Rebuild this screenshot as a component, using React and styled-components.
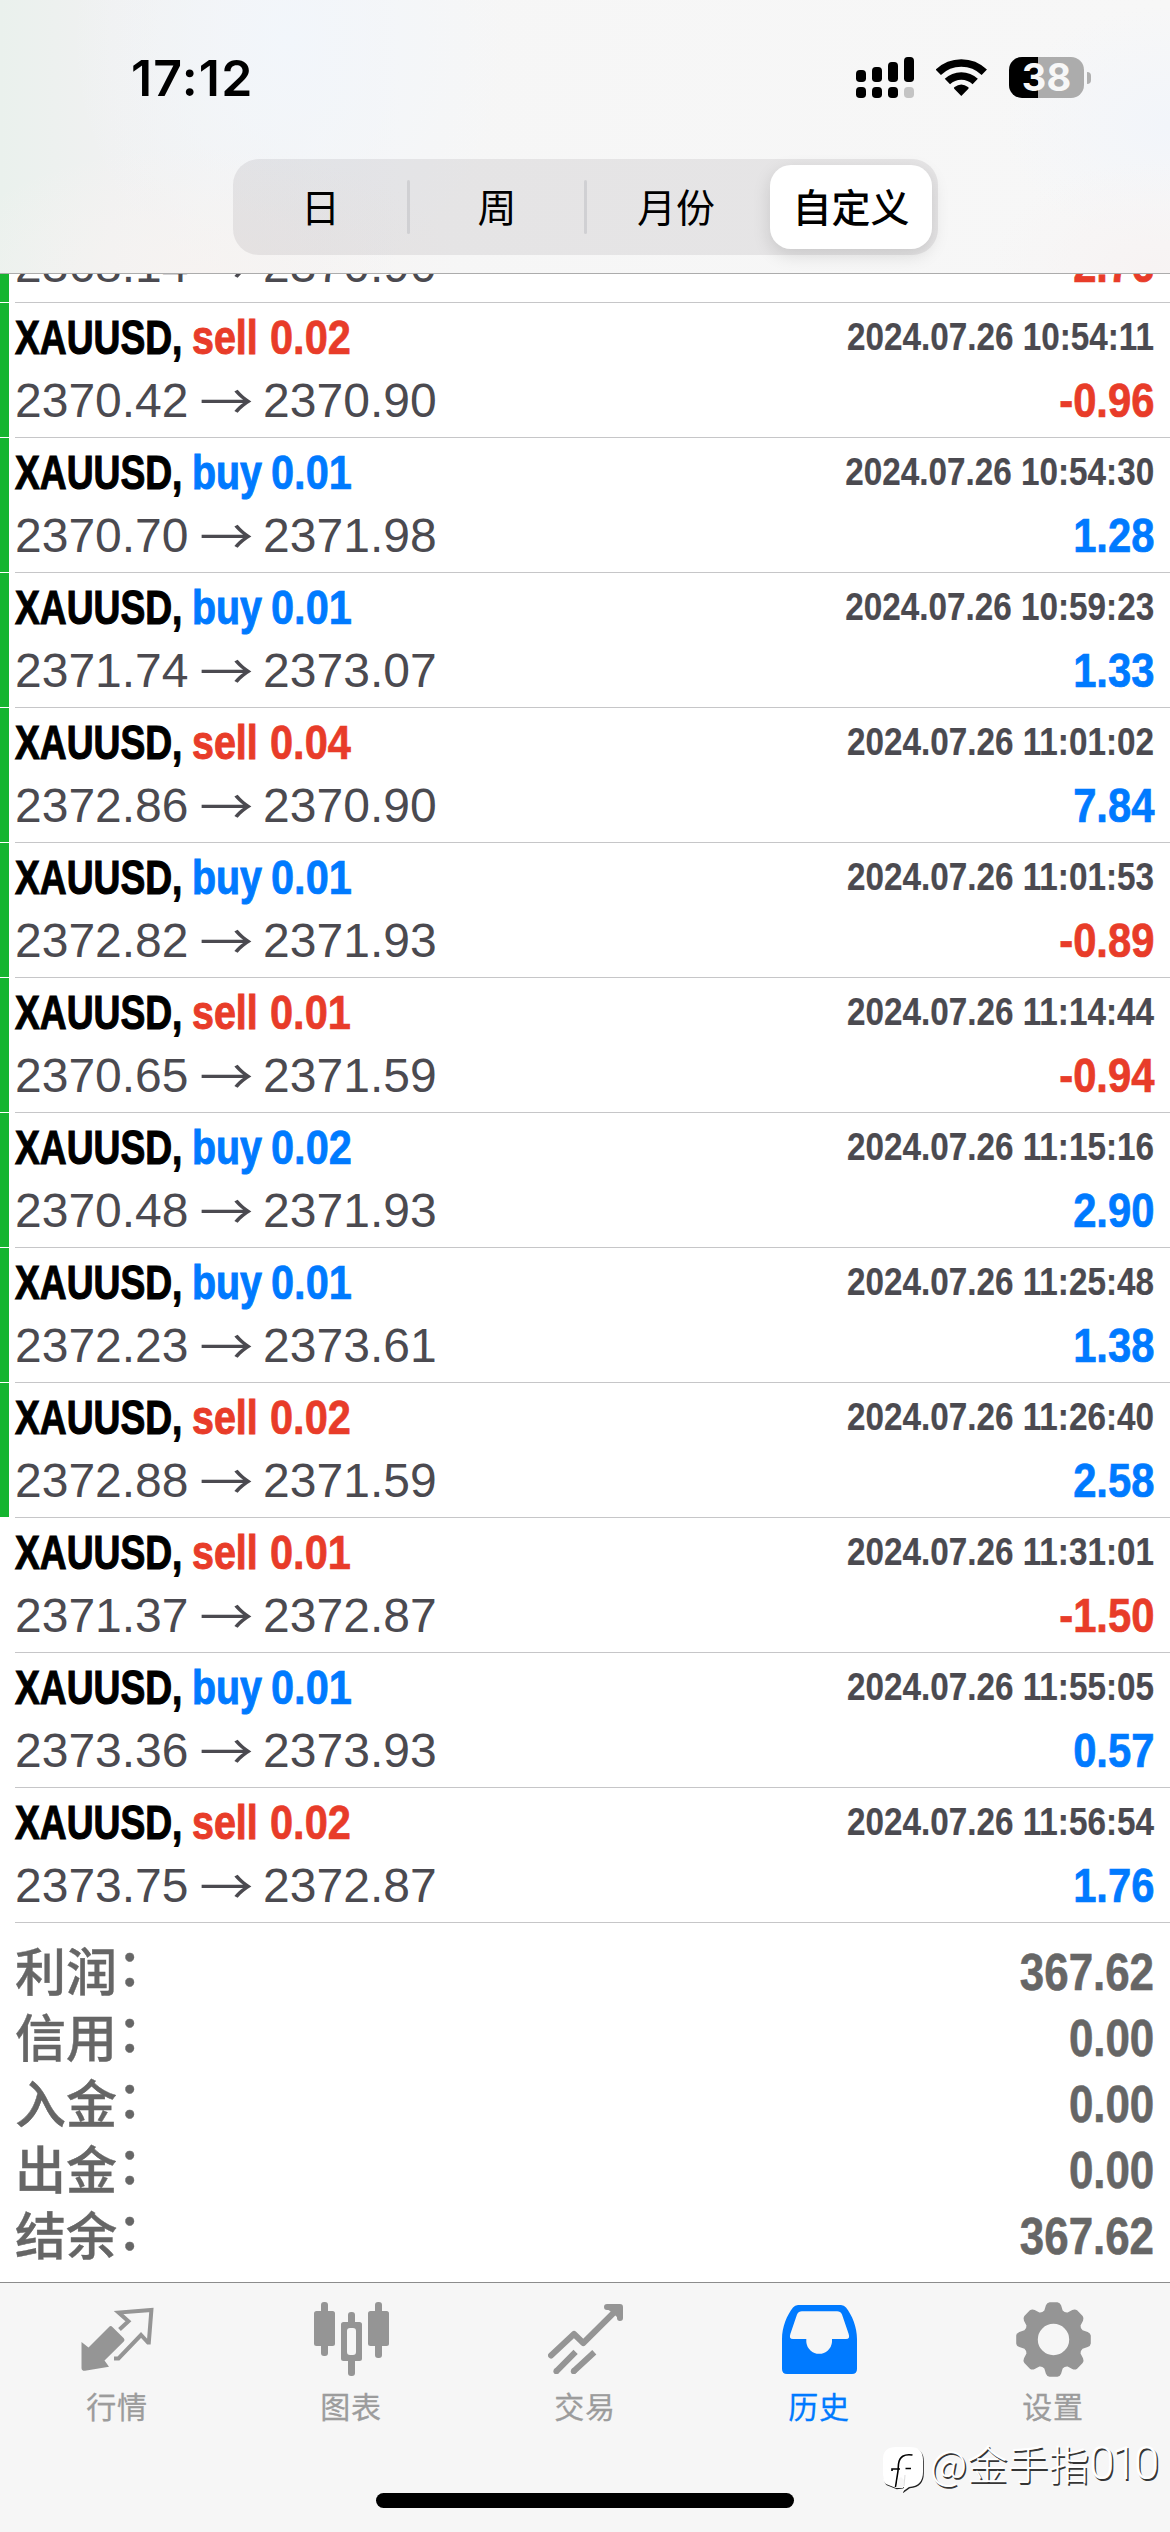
import React from "react";
import styled, { createGlobalStyle } from "styled-components";

const RED = "#e83c29";
const BLUE = "#007aff";
const CJK = '"Noto Sans CJK SC", sans-serif';
const HELV = '"Liberation Sans", Arial, "Noto Sans CJK SC", sans-serif';

const GlobalStyle = createGlobalStyle`
  *, *::before, *::after { box-sizing: border-box; }
  body { margin: 0; background: #fff; }
`;

const Screen = styled.main`
  width: 1170px;
  height: 2532px;
  display: flex;
  flex-direction: column;
  overflow: hidden;
  background: #fff;
  font-family: ${HELV};
`;

const Header = styled.header`
  flex: none;
  height: 274px;
  border-bottom: 1px solid #acacac;
  background:
    radial-gradient(ellipse 260px 130px at 200px 274px, rgba(247, 243, 241, 0.85), rgba(247, 243, 241, 0)),
    radial-gradient(ellipse 220px 260px at 290px 40px, rgba(242, 246, 251, 1), rgba(242, 246, 251, 0)),
    radial-gradient(ellipse 160px 110px at 1150px 270px, rgba(247, 243, 243, 1), rgba(247, 243, 243, 0)),
    radial-gradient(ellipse 170px 120px at 1170px 125px, rgba(242, 245, 250, 1), rgba(242, 245, 250, 0)),
    linear-gradient(90deg, #eaf1ed 0, #f0f1f1 110px, #f6f6f6 400px, #f7f7f7 100%);
`;

const StatusBar = styled.div`
  height: 159px;
  display: flex;
  justify-content: space-between;
  padding: 57px 79px 0 131px;
`;

const Clock = styled.div`
  height: 42px;
  font: 600 50px/42px Inter, sans-serif;
  letter-spacing: 1.2px;
  color: #000;
`;

const StatusIcons = styled.div`
  display: flex;
  align-items: flex-start;
  gap: 22px;
`;

const Battery = styled.div`
  display: flex;
  align-items: center;
  gap: 3px;
`;

const BatteryBody = styled.div`
  width: 75px;
  height: 41px;
  border-radius: 13px;
  background: linear-gradient(90deg, #000 29px, #acacac 29px);
  color: #f7f7f7;
  font: 700 38px/41px Inter, sans-serif;
  text-align: center;
`;

const BatteryTip = styled.div`
  width: 4px;
  height: 12px;
  border-radius: 0 5px 5px 0;
  background: #b0b0b0;
`;

const Segmented = styled.div`
  width: 705px;
  height: 96px;
  margin: 0 auto 0 233px;
  padding: 6px;
  display: flex;
  align-items: center;
  border-radius: 26px;
  background: rgba(118, 112, 118, 0.13);
`;

const Segment = styled.button`
  flex: 0 0 ${(p) => p.$width}px;
  height: 84px;
  padding: 0 ${(p) => p.$inset || 0}px 4px 0;
  border: 0;
  border-radius: 21px;
  background: ${(p) => (p.$active ? "#fff" : "transparent")};
  box-shadow: ${(p) => (p.$active ? "0 6px 18px rgba(0,0,0,.13)" : "none")};
  color: #000;
  font: ${(p) => (p.$active ? 500 : 400)} 39px/80px ${CJK};
  text-align: center;
`;

const Divider = styled.span`
  flex: none;
  width: 3px;
  height: 54px;
  border-radius: 2px;
  background: #d0d0d3;
`;

const History = styled.section`
  flex: none;
  height: 2008px;
  overflow: hidden;
  display: flex;
  flex-direction: column;
`;

const Deals = styled.ul`
  list-style: none;
  margin: -106px 0 0;
  padding: 0;
`;

const Deal = styled.li`
  display: flex;
  height: 135px;
`;

const Marker = styled.span`
  width: 9px;
  height: 134px;
  margin-right: 6px;
  background: ${(p) => (p.$on ? "#15b52f" : "transparent")};
`;

const DealBody = styled.div`
  flex: 1;
  padding: 3px 16px 0 0;
  border-bottom: 1px solid #c6c6c8;
`;

const Line = styled.div`
  display: flex;
  justify-content: space-between;
  height: 63px;
  line-height: 63px;
  font-size: 48px;
  white-space: pre;
`;

const Group = styled.div`
  display: flex;
`;

const Condensed = styled.span`
  display: block;
  width: ${(p) => (p.$width ? p.$width + "px" : "auto")};
  font-weight: 700;
  color: ${(p) => p.$color};
  transform: scaleX(${(p) => p.$scale});
  transform-origin: ${(p) => p.$origin || "left"} center;
  -webkit-text-stroke: ${(p) => p.$stroke || 0}px ${(p) => p.$color};
`;

const Stamp = styled(Condensed)`
  font-size: 39px;
  line-height: 61px;
`;

const Price = styled.span`
  color: #4b4a50;
`;

const Arrow = styled.span`
  display: block;
  width: 74.6px;
  text-align: center;
  color: #4b4a50;
  font-family: ${CJK};
  transform: translateY(-2px) scaleX(1.12);
`;

const Summary = styled.dl`
  margin: 0;
  padding: 16px 16px 0 15px;
`;

const Total = styled.div`
  display: flex;
  justify-content: space-between;
  height: 66px;
  font-size: 51px;
  line-height: 67px;
  color: #666;
`;

const TotalName = styled.dt`
  display: flex;
  line-height: 60px;
  font-family: ${CJK};
  font-weight: 500;
  -webkit-text-stroke: 0.4px #666;
`;

const Colon = styled.span`
  line-height: 51px;
`;

const TotalValue = styled.dd`
  margin: 0;
`;

const TabBar = styled.nav`
  position: relative;
  flex: none;
  height: 250px;
  border-top: 1px solid #8c8c8c;
  background: #f6f6f6;
  display: flex;
  flex-direction: column;
`;

const Tabs = styled.div`
  display: flex;
  height: 210px;
`;

const Tab = styled.a`
  flex: 1;
  display: flex;
  flex-direction: column;
  align-items: center;
  padding-top: 19px;
  color: ${(p) => (p.$active ? BLUE : "#959595")};
  font: 400 30px/44px ${CJK};
  svg { display: block; margin-bottom: 6px; }
`;

const TabLabel = styled.span`
  letter-spacing: 0.7px;
  color: ${(p) => (p.$active ? BLUE : "#9c9c9c")};
  -webkit-text-stroke: 0.3px ${(p) => (p.$active ? BLUE : "#9c9c9c")};
`;

const HomeIndicator = styled.div`
  width: 418px;
  height: 15px;
  margin: 0 auto;
  border-radius: 8px;
  background: #000;
`;

const Watermark = styled.div`
  position: absolute;
  left: 883px;
  top: 160px;
  display: flex;
  align-items: flex-start;
  gap: 6px;
  color: #fff;
  font: 300 40.7px/40px ${CJK};
  text-shadow: 1.5px 1.5px 0 rgba(0, 0, 0, 0.8);
  white-space: nowrap;
  svg { margin-top: 4px; }
`;

const WatermarkName = styled.span`
  display: flex;
`;

const WatermarkDigits = styled.span`
  font-family: Roboto, sans-serif;
  font-size: 46px;
  letter-spacing: -3.2px;
`;

function Signal() {
  const tops = [13, 10, 5, 0];
  return (
    <svg width="58" height="41" viewBox="0 0 58 41">
      {tops.map((y, i) => (
        <g key={i}>
          <rect x={i * 16} y={y} width="10" height={25 - y} rx="3.8" />
          <rect x={i * 16} y="30" width="10" height="11" rx="3.8" fill={i === 3 ? "#c4c4c4" : "#000"} />
        </g>
      ))}
    </svg>
  );
}

function Wifi() {
  return (
    <svg width="51" height="41" viewBox="0 -2 51 41">
      <g fill="none" stroke="#000" strokeWidth="7.6">
        <path d="M2.3 13.3A33 33 0 0 1 48.3 13.3" />
        <path d="M11.4 22.6A20 20 0 0 1 39.2 22.6" />
      </g>
      <path d="M25.3 37L18.2 29.8Q17.4 28.8 18.6 28Q25.3 22.8 32 28Q33.2 28.8 32.4 29.8Z" />
    </svg>
  );
}

function QuotesIcon() {
  return (
    <svg width="75" height="75" viewBox="0 0 75 75">
      <path fill="currentColor" d="M1.5 40L8.5 45.5L29 25Q30.7 23.2 32.4 25L43.8 36.2Q45.3 38 43.8 39.6L24.5 58.5L29 64.8L5 68.8Q1.5 69 1.5 66Z" />
      <path fill="none" stroke="currentColor" strokeWidth="4" d="M39.5 27.5L48.4 19.3L38.6 10.6L71.4 8L68.8 40.5H68L61 33L38.5 56.5H34" />
    </svg>
  );
}

function ChartIcon() {
  return (
    <svg width="75" height="75" viewBox="0 0 75 75" fill="currentColor">
      <rect x="7" width="7" height="54" rx="3" />
      <rect y="9" width="21" height="35" rx="2.5" />
      <rect x="34" y="10" width="7" height="14" rx="3" />
      <rect x="34" y="56" width="7" height="18" rx="3" />
      <path fillRule="evenodd" d="M29.5 20H45.5Q48 20 48 22.5V56.5Q48 59 45.5 59H29.5Q27 59 27 56.5V22.5Q27 20 29.5 20ZM36 26Q33 26 33 29V50Q33 53 36 53H39Q42 53 42 50V29Q42 26 39 26Z" />
      <rect x="61" width="7" height="56" rx="3" />
      <rect x="54" y="9" width="21" height="35" rx="2.5" />
    </svg>
  );
}

function TradeIcon() {
  return (
    <svg width="75" height="75" viewBox="0 0 75 75" fill="none" stroke="currentColor" strokeWidth="6">
      <path strokeLinecap="round" strokeLinejoin="round" d="M3 53.5L26 32L35.3 41L70 6.5M59 5H72V16" />
      <path fill="currentColor" stroke="none" d="M59 7H72V19L68 14L62 9Z" />
      <path d="M8.3 69.3L27.6 49.8M25.7 69.3L46.3 50.2" />
      <circle cx="8.3" cy="69.2" r="2.9" fill="currentColor" stroke="none" />
      <circle cx="25.7" cy="69.2" r="2.9" fill="currentColor" stroke="none" />
    </svg>
  );
}

function HistoryIcon() {
  return (
    <svg width="75" height="75" viewBox="0 0 75 75">
      <path
        fill="currentColor"
        fillRule="evenodd"
        d="M0 37C0 25 5 13 11 5.5Q13 3 16 3H59Q62 3 64 5.5C70 13 75 25 75 37V67Q75 72 70 72H5Q0 72 0 67ZM20 9.3Q16.500 9.3 15 12.500L8.500 31.500Q6.500 37 11 37H24.300V40A12.900 12.900 0 0 0 50 40V37H64Q68.500 37 66.500 31.500L60 12.500Q58.500 9.300 55 9.300Z"
      />
    </svg>
  );
}

function GearIcon() {
  const polar = (deg, r) => {
    const a = (deg * Math.PI) / 180;
    return `${(37.5 + r * Math.sin(a)).toFixed(2)} ${(37.5 - r * Math.cos(a)).toFixed(2)}`;
  };
  let d = "";
  for (let k = 0; k < 8; k++) {
    const c = k * 45;
    d += `${k ? "L" : "M"}${polar(c - 17.5, 30.5)}L${polar(c - 12.5, 35)}Q${polar(c - 10, 37.5)} ${polar(c - 6, 37.5)}L${polar(c + 6, 37.5)}Q${polar(c + 10, 37.5)} ${polar(c + 12.5, 35)}L${polar(c + 17.5, 30.5)}Q${polar(c + 22.5, 29)} ${polar(c + 27.5, 30.5)}`;
  }
  return (
    <svg width="75" height="75" viewBox="0 0 75 75">
      <path fill="currentColor" fillRule="evenodd" d={`${d}ZM21.8 37.5a15.700 15.700 0 1 0 31.400 0a15.700 15.700 0 1 0 -31.400 0Z`} />
    </svg>
  );
}

function WatermarkLogo() {
  const bubble = "M13 0H27Q40 0 40 13V25Q40 39 26 40L19 45L21 40L13 41L3 37Q0 35 0 28V12Q0 0 13 0Z";
  return (
    <svg width="41" height="48" viewBox="0 0 41 48">
      <path d={bubble} transform="translate(0.800 1.300)" fill="#222" />
      <path d={bubble} fill="#fff" />
      <path fill="none" stroke="#000" strokeWidth="1.6" d="M29.500 8Q17 6 15.500 17L15 24L12.500 40M9 24V22H17M22.500 21.500H28" />
      <path d="M13.500 41L20 41L21 33L18 30L15 32Z" fill="#f6f6f6" />
      <path d="M21 39L22 28" fill="none" stroke="#ddd" strokeWidth="1" />
    </svg>
  );
}

const deals = [
  [null, null, "2368.14", "2370.90", null, "-2.76", true],
  ["sell", "0.02", "2370.42", "2370.90", "2024.07.26 10:54:11", "-0.96", true],
  ["buy", "0.01", "2370.70", "2371.98", "2024.07.26 10:54:30", "1.28", true],
  ["buy", "0.01", "2371.74", "2373.07", "2024.07.26 10:59:23", "1.33", true],
  ["sell", "0.04", "2372.86", "2370.90", "2024.07.26 11:01:02", "7.84", true],
  ["buy", "0.01", "2372.82", "2371.93", "2024.07.26 11:01:53", "-0.89", true],
  ["sell", "0.01", "2370.65", "2371.59", "2024.07.26 11:14:44", "-0.94", true],
  ["buy", "0.02", "2370.48", "2371.93", "2024.07.26 11:15:16", "2.90", true],
  ["buy", "0.01", "2372.23", "2373.61", "2024.07.26 11:25:48", "1.38", true],
  ["sell", "0.02", "2372.88", "2371.59", "2024.07.26 11:26:40", "2.58", true],
  ["sell", "0.01", "2371.37", "2372.87", "2024.07.26 11:31:01", "-1.50", false],
  ["buy", "0.01", "2373.36", "2373.93", "2024.07.26 11:55:05", "0.57", false],
  ["sell", "0.02", "2373.75", "2372.87", "2024.07.26 11:56:54", "1.76", false],
];

const totals = [
  ["利润", "367.62"],
  ["信用", "0.00"],
  ["入金", "0.00"],
  ["出金", "0.00"],
  ["结余", "367.62"],
];

const tabs = [
  ["行情", QuotesIcon],
  ["图表", ChartIcon],
  ["交易", TradeIcon],
  ["历史", HistoryIcon],
  ["设置", GearIcon],
];

function DealRow({ deal }) {
  const [side, lots, open, close, time, profit, marked] = deal;
  const sell = side === "sell";
  const sideColor = sell ? RED : BLUE;
  return (
    <Deal>
      <Marker $on={marked} />
      <DealBody>
        <Line>
          {side && (
            <>
              <Group>
                <Condensed $width={177} $scale={0.775} $color="#000" $stroke={1.1}>XAUUSD,</Condensed>
                <Condensed $width={sell ? 78 : 79} $scale={0.82} $color={sideColor} $stroke={1}>{side}</Condensed>
                <Condensed $scale={0.865} $color={sideColor} $stroke={0.7}>{lots}</Condensed>
              </Group>
              <Stamp $scale={0.853} $color="#4b4a50" $origin="right" $stroke={0.2}>{time}</Stamp>
            </>
          )}
        </Line>
        <Line>
          <Group>
            <Price>{open}</Price>
            <Arrow>→</Arrow>
            <Price>{close}</Price>
          </Group>
          <Condensed $scale={0.87} $color={profit[0] === "-" ? RED : BLUE} $stroke={0.7} $origin="right">{profit}</Condensed>
        </Line>
      </DealBody>
    </Deal>
  );
}

export default function App() {
  return (
    <Screen>
      <GlobalStyle />
      <Header>
        <StatusBar>
          <Clock>17:12</Clock>
          <StatusIcons>
            <Signal />
            <Wifi />
            <Battery>
              <BatteryBody>38</BatteryBody>
              <BatteryTip />
            </Battery>
          </StatusIcons>
        </StatusBar>
        <Segmented>
          <Segment $width={168} $inset={5}>日</Segment>
          <Divider />
          <Segment $width={174}>周</Segment>
          <Divider />
          <Segment $width={183} $inset={5}>月份</Segment>
          <Segment $width={162} $active>自定义</Segment>
        </Segmented>
      </Header>
      <History>
        <Deals>
          {deals.map((d) => (
            <DealRow key={d[2] + d[3]} deal={d} />
          ))}
        </Deals>
        <Summary>
          {totals.map(([name, value]) => (
            <Total key={name}>
              <TotalName>{name}<Colon>：</Colon></TotalName>
              <TotalValue>
                <Condensed $scale={0.86} $color="#666" $stroke={0.6} $origin="right">{value}</Condensed>
              </TotalValue>
            </Total>
          ))}
        </Summary>
      </History>
      <TabBar>
        <Tabs>
          {tabs.map(([label, Icon]) => (
            <Tab key={label} $active={label === "历史"}>
              <Icon />
              <TabLabel $active={label === "历史"}>{label}</TabLabel>
            </Tab>
          ))}
        </Tabs>
        <HomeIndicator />
        <Watermark>
          <WatermarkLogo />
          <WatermarkName>@金手指<WatermarkDigits>010</WatermarkDigits></WatermarkName>
        </Watermark>
      </TabBar>
    </Screen>
  );
}
